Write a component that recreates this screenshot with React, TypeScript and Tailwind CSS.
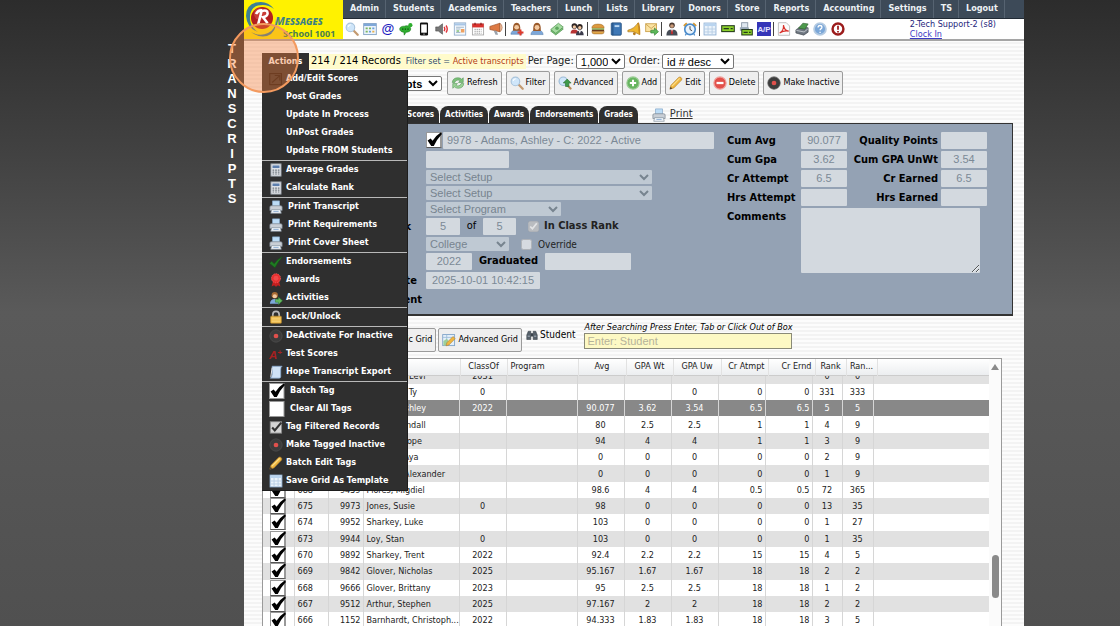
import React from 'react';
import clsx from 'clsx';

// 16x16 drawings used by the toolbar, the menu and the buttons
const icons: Record<string, React.ReactNode> = {
  search: (
    <>
      <path d="M9.5 9.5l5 5" stroke="#c39a70" strokeWidth="2.6" strokeLinecap="round" />
      <circle cx="6.2" cy="6.2" r="4.9" fill="#cfe6fa" stroke="#a9c4dc" strokeWidth="1.3" />
      <path d="M3.6 5.6a3 3 0 0 1 3-2.4" stroke="#fff" strokeWidth="1.2" fill="none" />
    </>
  ),
  searchPlus: (
    <>
      <path d="M10 10l4.4 4.4" stroke="#b98a55" strokeWidth="2.4" strokeLinecap="round" />
      <circle cx="6" cy="6" r="4.8" fill="#cfe6fa" stroke="#9dbbd6" strokeWidth="1.3" />
      <path d="M10.5 3.5l4.5 4.5h-2.6v4H8.6V8H6z" fill="#3f9a4a" stroke="#2b6f35" strokeWidth=".7" />
    </>
  ),
  calendar: (
    <>
      <rect x=".8" y="1.8" width="14.4" height="12.6" fill="#eef5fc" stroke="#7f9fc2" />
      <rect x="1" y="2" width="14" height="2.6" fill="#7fa8d8" />
      <path d="M3 6.4h2.4v2H3zM6.8 6.4h2.4v2H6.8zM3 10h2.4v2H3z" fill="#7bb661" />
      <path d="M10.6 6.4H13v2h-2.4zM6.8 10h2.4v2H6.8z" fill="#6aa0dc" />
      <path d="M10.6 10H13v2h-2.4z" fill="#e8b04c" />
    </>
  ),
  chat: (
    <>
      <path d="M.8 8C.8 5.6 3.600 4.600 6.600 4.800 9 3.600 13.400 4.600 13.400 8c0 2.600-3 3.800-5.400 3.600L6 15l-.4-3.400C3 11.600.8 10.200.8 8z" fill="#2fae2f" stroke="#1c7d1f" strokeWidth=".7" />
      <path d="M3.600 8.200H5M6.600 8.200H8M9.600 8.200H11" stroke="#0b4a0d" strokeWidth="1.500" />
      <circle cx="13" cy="3.600" r="2.400" fill="#2fae2f" />
    </>
  ),
  phone: (
    <>
      <rect x="3.4" y=".6" width="9.2" height="14.8" rx="1.4" fill="#111" />
      <rect x="4.8" y="2.8" width="6.4" height="9.4" fill="#fff" />
      <circle cx="8" cy="13.8" r=".8" fill="#ddd" />
    </>
  ),
  speaker: (
    <>
      <path d="M.8 5.6h3L8.6 2v12L3.8 10.4h-3z" fill="#777" stroke="#444" strokeWidth=".6" />
      <path d="M10.4 5.6q1.6 2.4 0 4.8M12.6 4q2.800 4 0 8" stroke="#e0343a" strokeWidth="1.600" fill="none" />
    </>
  ),
  sheet: (
    <>
      <rect x="1.5" y="1" width="13" height="14" fill="#f4f8fc" stroke="#93aecb" />
      <path d="M2 1.5h12V4H2z" fill="#a8c6e6" />
      <path d="M3.5 6h9M3.5 8h5M3.5 12h5" stroke="#9ab0c5" />
      <path d="M9 8h4v4H9z" fill="#efa160" />
      <path d="M4 9.5h3v1.6H4z" fill="#7dbb6c" />
    </>
  ),
  redCal: (
    <>
      <rect x="1.6" y="2.2" width="12.8" height="12.6" fill="#fff" stroke="#a9a9a9" />
      <rect x="1.4" y="1.8" width="13.2" height="4.4" fill="#d8322e" />
      <path d="M4.6.8v2.6M11.4.8v2.6" stroke="#8d1c1a" strokeWidth="1.4" />
      <path d="M4 8.4h8M4 10.6h8M4 12.8h8" stroke="#888" strokeDasharray="1.4 1" />
    </>
  ),
  megaphone: (
    <>
      <path d="M1 5L12.400 1.400v9.800L1 8.600z" fill="#dd7a45" stroke="#96461d" strokeWidth=".7" />
      <path d="M12.400 1.400v9.800q2.600-1.600 2.600-4.900t-2.600-4.900z" fill="#f3c6a6" stroke="#96461d" strokeWidth=".6" />
      <path d="M5.400 9.600l2 5h3l-1.600-4.400z" fill="#9aa2ab" />
    </>
  ),
  userAdd: (
    <>
      <path d="M1 14q.4-5 6.400-5t6.400 5z" fill="#7da7d9" stroke="#4b77ab" strokeWidth=".6" />
      <path d="M3.400 10Q2.800.8 7.600.8T11.800 10z" fill="#9a5a2b" />
      <circle cx="7.600" cy="6" r="2.700" fill="#f3c9a0" />
      <path d="M12 8.600v6.800M8.600 12h6.800" stroke="#e03a2c" strokeWidth="2.200" />
    </>
  ),
  user: (
    <>
      <path d="M1 14.400q.4-5.400 7-5.400t7 5.400z" fill="#7da7d9" stroke="#4b77ab" strokeWidth=".6" />
      <path d="M3.600 10.400Q3 .8 8 .8t4.400 9.600z" fill="#9a5a2b" />
      <circle cx="8" cy="6.200" r="2.800" fill="#f3c9a0" />
    </>
  ),
  money: (
    <>
      <path d="M.8 10.400L9.600 4l5.600 4L6.600 14.800z" fill="#7fc47c" stroke="#4a8f4b" strokeWidth=".8" />
      <path d="M.8 8.600L9.600 1.400l5.600 4.400L6.600 13z" fill="#a5dba0" stroke="#4a8f4b" strokeWidth=".8" />
      <circle cx="8" cy="7.200" r="2" fill="#5ea75e" />
    </>
  ),
  people: (
    <>
      <circle cx="5" cy="4.600" r="3.200" fill="#2c2422" />
      <circle cx="5" cy="5.600" r="1.900" fill="#f0c6a0" />
      <path d="M.6 13q0-4.400 4.400-4.400T9.400 13z" fill="#b83434" />
      <circle cx="11.200" cy="5.600" r="3.200" fill="#2c2422" />
      <circle cx="11.200" cy="6.600" r="1.900" fill="#f0c6a0" />
      <path d="M6.800 15q0-5 4.400-5t4.400 5z" fill="#3c3c4c" />
      <path d="M10 10.400l1.200 3 1.200-3z" fill="#fff" />
    </>
  ),
  burger: (
    <>
      <path d="M1 7q0-4.600 7-4.600T15 7z" fill="#dd9a3e" stroke="#9a6320" strokeWidth=".6" />
      <path d="M1 7.400h14v1.400H1z" fill="#6fae3c" />
      <path d="M1 8.800h14v2H1z" fill="#6b3a1c" />
      <path d="M1 10.800h14q0 2.800-2.400 2.800H3.400Q1 13.600 1 10.800z" fill="#e2a649" stroke="#9a6320" strokeWidth=".6" />
    </>
  ),
  book: (
    <>
      <rect x="2.600" y="1" width="11.400" height="14" rx="1" fill="#3f78b6" stroke="#234f80" />
      <path d="M4.400 1v14" stroke="#1f4a78" />
      <path d="M6.400 3.600h5.400v2.200H6.400z" fill="#bcd8f2" />
    </>
  ),
  bell: (
    <>
      <path d="M1 9.400Q8.400 7.600 12.600 1l1.800 13.400Q8 9.600 1 11.200z" fill="#efb62f" stroke="#a6741a" strokeWidth=".8" />
      <path d="M12.600 1q1.800 1.400 1.800 13.400" stroke="#c9861a" strokeWidth="1.600" fill="none" />
      <circle cx="8.400" cy="13.400" r="1.600" fill="#b47a1b" />
    </>
  ),
  mail: (
    <>
      <rect x=".8" y="2" width="12.400" height="9" fill="#fbe3a3" stroke="#caa04a" />
      <path d="M1 2.400l6 5 6-5" fill="none" stroke="#caa04a" />
      <path d="M6.600 9.400h4.200V6.800L15.400 11l-4.600 4.200v-2.600H6.600z" fill="#5cb85a" stroke="#2f7d30" strokeWidth=".7" />
    </>
  ),
  man: (
    <>
      <circle cx="8" cy="3.800" r="3.200" fill="#4b3a30" />
      <circle cx="8" cy="4.600" r="2.100" fill="#c99a78" />
      <path d="M1.600 15.400q0-7 6.400-7t6.400 7z" fill="#474d57" />
      <path d="M6.200 8.400L8 12l1.800-3.600z" fill="#fff" />
      <path d="M7.400 9h1.200l.6 4L8 14.400 6.800 13z" fill="#c22a2a" />
    </>
  ),
  clock: (
    <>
      <path d="M1 4.600L4.400 1.400M15 4.600l-3.400-3.200" stroke="#d79a34" strokeWidth="2.200" />
      <circle cx="8" cy="8.400" r="6" fill="#eaf4fd" stroke="#4a8bcb" strokeWidth="1.900" />
      <path d="M8 4.800v3.800l2.400 1.400" stroke="#444" strokeWidth="1.100" fill="none" />
      <path d="M3.800 13.400L2.600 15.200M12.200 13.400l1.200 1.800" stroke="#4a8bcb" strokeWidth="1.400" />
    </>
  ),
  table: (
    <>
      <rect x="1.200" y="1.200" width="13.600" height="13.600" fill="#eaf3fb" stroke="#8fb0d3" />
      <path d="M1.600 1.600h12.800v3H1.600z" fill="#b9d4ef" />
      <path d="M1.200 8h13.600M1.200 11.400h13.600M5.800 4.600v10M10.400 4.600v10" stroke="#b6cde4" />
    </>
  ),
  card: (
    <>
      <rect x=".2" y="3.600" width="15.600" height="8" fill="#23391a" />
      <rect x="1.400" y="4.800" width="13.200" height="5.600" fill="#8bd02c" />
      <path d="M3 7.600h6M11 7.600h2.400" stroke="#23391a" strokeWidth="1.600" />
    </>
  ),
  register: (
    <>
      <rect x="3" y=".8" width="7" height="6" fill="#dfe7ef" stroke="#8795a4" />
      <path d="M1 6h10l1 4H1z" fill="#9aa9b8" />
      <rect x="2.600" y="8" width="13.200" height="7.400" fill="#23391a" />
      <rect x="3.800" y="9.200" width="10.800" height="5" fill="#8bd02c" />
      <path d="M5.200 11.800H10M11.400 11.800h2" stroke="#23391a" strokeWidth="1.400" />
    </>
  ),
  pdf: (
    <>
      <path d="M1.600.8h9l3.800 3.800v10.600H1.600z" fill="#fbfbfb" stroke="#b9b9b9" />
      <path d="M3 12.600c3-1.600 4.600-5.600 4.400-9 .6 4 3 6.600 6 6.800-4-.8-7.400.2-10.400 2.200z" fill="none" stroke="#d8302a" strokeWidth="1.300" />
    </>
  ),
  scanner: (
    <>
      <path d="M1 9l5-3.600 9 1.200v5L10 15 1 12.600z" fill="#6e7680" stroke="#3f454c" strokeWidth=".7" />
      <path d="M4 7l5-5.600 6 .8-3.600 6z" fill="#4d9a4c" stroke="#2c5c2c" strokeWidth=".7" />
      <path d="M1.600 9.600l8.800 1.800L14.600 8" fill="none" stroke="#c8ced4" />
    </>
  ),
  help: (
    <>
      <circle cx="8" cy="8" r="6.800" fill="#7ba7d8" stroke="#b5cbe2" strokeWidth="2" />
      <path d="M5.800 6.200q0-2.200 2.200-2.200t2.200 2q0 1.200-1.200 1.800-.9.500-.9 1.600M8.100 11v1.600" stroke="#fff" strokeWidth="1.500" fill="none" />
    </>
  ),
  alert: (
    <>
      <circle cx="8" cy="8" r="6.200" fill="#fff" stroke="#9c1c1c" strokeWidth="2.800" />
      <path d="M8 4.200v4.600M8 10.200v1.900" stroke="#9c1c1c" strokeWidth="2" />
    </>
  ),
  refresh: (
    <>
      <path d="M1.400 7.400Q2 2 8 2q2.600 0 4.200 1.600L14 2v5.400H8.600l1.800-2Q9.400 4.600 8 4.600 5 4.600 4.400 7.400z" fill="#7cc07a" stroke="#4b8f4d" strokeWidth=".6" />
      <path d="M14.600 8.600Q14 14 8 14q-2.600 0-4.200-1.600L2 14V8.600h5.400l-1.800 2q1 .8 2.400.8 3 0 3.600-2.800z" fill="#9bd298" stroke="#4b8f4d" strokeWidth=".6" />
    </>
  ),
  add: (
    <>
      <circle cx="8" cy="8" r="7" fill="#67b560" stroke="#98cb92" strokeWidth="1.400" />
      <path d="M8 4.400v7.200M4.400 8h7.200" stroke="#fff" strokeWidth="2.200" />
    </>
  ),
  remove: (
    <>
      <circle cx="8" cy="8" r="7" fill="#e2504a" stroke="#f0a19c" strokeWidth="1.400" />
      <path d="M4 8h8" stroke="#fff" strokeWidth="2.600" />
    </>
  ),
  pencil: (
    <>
      <path d="M1 15l1.200-4.400L11 1.600q1.400-1 2.800.2t.6 2.800L5.600 13.600z" fill="#f0b740" stroke="#b3802a" strokeWidth=".7" />
      <path d="M3.400 11.600l8.800-9" stroke="#fbe08d" strokeWidth="1.300" />
      <path d="M1 15l.8-2.800 2 2z" fill="#4a3a2a" />
    </>
  ),
  record: (
    <>
      <circle cx="8" cy="8" r="7" fill="#3c3c3c" stroke="#4c4c4c" />
      <circle cx="8" cy="8" r="2.700" fill="#e0504c" />
    </>
  ),
  printer: (
    <>
      <path d="M4 7V1h8v6z" fill="#bcdcf6" stroke="#86a8c9" strokeWidth=".8" />
      <path d="M1 12V8q0-1.400 1.600-1.400h10.800Q15 6.600 15 8v4z" fill="#c9cfd6" stroke="#7d8791" strokeWidth=".8" />
      <path d="M3 11h10l1 4.200H2z" fill="#eef3f8" stroke="#8794a1" strokeWidth=".8" />
      <path d="M5 13h6" stroke="#7fa3cd" />
    </>
  ),
  calc: (
    <>
      <rect x="2.200" y="1" width="11.600" height="14" fill="#e6e9ed" stroke="#9097a0" />
      <rect x="4" y="2.800" width="8" height="3" fill="#5d7fae" />
      <path d="M4 8.200h8M4 10.400h8M4 12.600h8" stroke="#6d747c" strokeWidth="1.300" strokeDasharray="2 1" />
    </>
  ),
  check: <path d="M.6 9.600l2.400-2.400 3 2.800Q9.600 4.600 15.400 1.600q-5 6-8.600 13z" fill="#1f7a22" stroke="#135516" strokeWidth=".6" />,
  ribbon: (
    <>
      <path d="M4.600 9L3 15.400l2.800-1.400L8 15.600l2.200-1.600 2.800 1.400L11.400 9z" fill="#c41f1f" />
      <circle cx="8" cy="6" r="5.200" fill="#e83030" stroke="#ee5c5c" strokeDasharray="1.600 1" />
      <circle cx="8" cy="6" r="2.800" fill="#f04a4a" />
    </>
  ),
  userArrow: (
    <>
      <path d="M1 14.600q.4-5.600 5.600-5.600t5.600 5.600z" fill="#7da7d9" />
      <circle cx="6.600" cy="4.800" r="3.600" fill="#a86a33" />
      <circle cx="6.600" cy="6" r="2.400" fill="#f3c9a0" />
      <path d="M7.400 9.400h3.400V7l4.600 4.200-4.600 4.200v-2.600H7.400z" fill="#63b85f" stroke="#2f7d30" strokeWidth=".6" />
    </>
  ),
  lock: (
    <>
      <path d="M4.400 8V5q0-3.400 3.600-3.400T11.600 5v3" fill="none" stroke="#b9b9b9" strokeWidth="1.900" />
      <rect x="1.800" y="7" width="12.400" height="8.200" rx="1" fill="#efb947" stroke="#b3832a" strokeWidth=".7" />
      <path d="M3 9.400h10M3 11.400h10M3 13.400h10" stroke="#f8dc8e" strokeWidth=".8" />
    </>
  ),
  aPlus: (
    <text x="0" y="14" fontSize="13" fontWeight="bold" fontStyle="italic" fontFamily="Liberation Sans, sans-serif" fill="#a82020">
      A<tspan dy="-5" fontSize="9">+</tspan>
    </text>
  ),
  at: (
    <text x="8" y="12.500" textAnchor="middle" fontSize="15" fontWeight="bold" fontFamily="Liberation Sans, sans-serif" fill="#1a1ac0">
      @
    </text>
  ),
  ap: (
    <>
      <rect width="16" height="16" fill="#3535b8" />
      <text x="8" y="11.500" textAnchor="middle" fontSize="9" fontWeight="bold" fontFamily="Liberation Sans, sans-serif" fill="#e4e4ff">
        A/P
      </text>
    </>
  ),
  scroll: (
    <>
      <path d="M3.600 1.400H15q-1.800 1-1.600 4v8q0 1.600-1.600 1.600H1.400q1.800-1 2.200-4z" fill="#cfe2f6" stroke="#7fa3cd" strokeWidth=".8" />
      <path d="M3.600 3L2 13.600" stroke="#fff" />
    </>
  ),
  tagCheck: (
    <>
      <rect x="1.400" y="2" width="13" height="13" fill="#d5d5d5" stroke="#888" />
      <path d="M3.600 8.600l3 3.200L14 3" stroke="#333" strokeWidth="2.400" fill="none" />
    </>
  ),
  gridEdit: (
    <>
      <rect x=".8" y="1.800" width="13.600" height="12.600" fill="#e4f0fa" stroke="#7fa3c8" />
      <path d="M.8 5h13.600M5.400 2v12" stroke="#9dbbd8" />
      <path d="M1.600 9l4-2.400 3 4-4.400 3.600H1.600z" fill="#9ccf9a" />
      <path d="M4.600 14.600l.9-3.400 7-7.200 2.600 2.400-7.200 7.400z" fill="#efb740" stroke="#a8772a" strokeWidth=".6" />
    </>
  ),
  binoculars: (
    <>
      <path d="M1 14V8l2-5h3.400v11zM15 14V8l-2-5H9.600v11z" fill="#56606a" stroke="#333b43" strokeWidth=".7" />
      <path d="M6.400 5.600h3.200V10H6.400z" fill="#39424b" />
      <path d="M2.200 9.600h3M10.800 9.600h3" stroke="#a9b4bf" strokeWidth="1.300" />
    </>
  ),
  external: (
    <g stroke="#15110f" strokeWidth="1.300" fill="none">
      <rect x=".8" y="1.800" width="13.400" height="12.600" />
      <path d="M3.600 12L12 4.400M6.600 4h5.800v5.600" />
    </g>
  ),
};

const tick = 'M1.600 8.400l3-2 2 2.400Q9.600 3.600 15 .2l.9 1.800Q10.600 7.600 7.800 14H5.200z';

function Icon({ name, className = 'size-[14px]' }: { name: string; className?: string }) {
  return (
    <svg viewBox="0 0 16 16" aria-hidden="true" className={clsx('shrink-0', className)}>
      {icons[name]}
    </svg>
  );
}

function TagBox({ label, checked = true }: { label: string; checked?: boolean }) {
  return (
    <span className="relative block size-[16px] shrink-0">
      <input
        type="checkbox"
        aria-label={label}
        defaultChecked={checked}
        className="peer block size-[16px] appearance-none border border-[#999] border-r-2 border-r-[#999] border-b-[#555] bg-white"
      />
      <svg viewBox="0 0 16 16" aria-hidden="true" className="pointer-events-none absolute inset-0 hidden size-[16px] peer-checked:block">
        <path d={tick} fill="#000" />
      </svg>
    </span>
  );
}

const navItems = ['Admin', 'Students', 'Academics', 'Teachers', 'Lunch', 'Lists', 'Library', 'Donors', 'Store', 'Reports', 'Accounting', 'Settings', 'TS', 'Logout'];

const toolGroups = [
  ['search', 'calendar', 'at', 'chat', 'phone', 'speaker', 'sheet', 'redCal', 'megaphone'],
  ['userAdd', 'user', 'money', 'people'],
  ['burger', 'book', 'bell', 'mail'],
  ['man', 'clock'],
  ['table', 'card', 'register', 'ap'],
  ['pdf', 'scanner', 'help', 'alert'],
];

type MenuItem = { text: string; icon?: string; wide?: boolean; box?: boolean };

const menuGroups: MenuItem[][] = [
  [
    { text: 'Add/Edit Scores', icon: 'external' },
    { text: 'Post Grades' },
    { text: 'Update In Process' },
    { text: 'UnPost Grades' },
    { text: 'Update FROM Students' },
  ],
  [
    { text: 'Average Grades', icon: 'calc' },
    { text: 'Calculate Rank', icon: 'calc' },
  ],
  [
    { text: 'Print Transcript', icon: 'printer', wide: true },
    { text: 'Print Requirements', icon: 'printer', wide: true },
    { text: 'Print Cover Sheet', icon: 'printer', wide: true },
  ],
  [
    { text: 'Endorsements', icon: 'check' },
    { text: 'Awards', icon: 'ribbon' },
    { text: 'Activities', icon: 'userArrow' },
  ],
  [{ text: 'Lock/Unlock', icon: 'lock' }],
  [
    { text: 'DeActivate For Inactive', icon: 'record' },
    { text: 'Test Scores', icon: 'aPlus' },
    { text: 'Hope Transcript Export', icon: 'scroll' },
  ],
  [
    { text: 'Batch Tag', box: true },
    { text: 'Clear All Tags', box: false },
    { text: 'Tag Filtered Records', icon: 'tagCheck' },
    { text: 'Make Tagged Inactive', icon: 'record' },
    { text: 'Batch Edit Tags', icon: 'pencil' },
    { text: 'Save Grid As Template', icon: 'table' },
  ],
];

const buttons = [
  ['refresh', 'Refresh'],
  ['search', 'Filter'],
  ['searchPlus', 'Advanced'],
  ['add', 'Add'],
  ['pencil', 'Edit'],
  ['remove', 'Delete'],
  ['record', 'Make Inactive'],
];

const tabs = ['Test Scores', 'Activities', 'Awards', 'Endorsements', 'Grades'];

const headers = ['', '', '', '', 'ClassOf', 'Program', 'Avg', 'GPA Wt', 'GPA Uw', 'Cr Atmpt', 'Cr Ernd', 'Rank', 'Ran...', ''];

// tag id, student id, name, class, program, avg, wt, uw, attempted, earned, rank, of
const rows = [
  ['698', '9984', 'Simmons, Levi', '2031', '', '', '', '', '', '', '0', '0'],
  ['697', '9981', 'Robinson, Ty', '0', '', '', '', '0', '0', '0', '331', '333'],
  ['696', '9978', 'Adams, Ashley', '2022', '', '90.077', '3.62', '3.54', '6.5', '6.5', '5', '5'],
  ['694', '9977', 'James, Kendall', '', '', '80', '2.5', '2.5', '1', '1', '4', '9'],
  ['693', '9976', 'Moore, Shope', '', '', '94', '4', '4', '1', '1', '3', '9'],
  ['692', '9975', 'Thomas, Aya', '', '', '0', '0', '0', '0', '0', '2', '9'],
  ['691', '9974', 'Hopkins, Alexander', '', '', '0', '0', '0', '0', '0', '1', '9'],
  ['688', '9459', 'Flores, Migdiel', '', '', '98.6', '4', '4', '0.5', '0.5', '72', '365'],
  ['675', '9973', 'Jones, Susie', '0', '', '98', '0', '0', '0', '0', '13', '35'],
  ['674', '9952', 'Sharkey, Luke', '', '', '103', '0', '0', '0', '0', '1', '27'],
  ['673', '9944', 'Loy, Stan', '0', '', '103', '0', '0', '0', '0', '1', '35'],
  ['670', '9892', 'Sharkey, Trent', '2022', '', '92.4', '2.2', '2.2', '15', '15', '4', '5'],
  ['669', '9842', 'Glover, Nicholas', '2025', '', '95.167', '1.67', '1.67', '18', '18', '2', '2'],
  ['668', '9666', 'Glover, Brittany', '2023', '', '95', '2.5', '2.5', '18', '18', '1', '2'],
  ['667', '9512', 'Arthur, Stephen', '2025', '', '97.167', '2', '2', '18', '18', '2', '2'],
  ['666', '1152', 'Barnhardt, Christoph...', '2022', '', '94.333', '1.83', '1.83', '18', '18', '3', '5'],
];

const cellAlign = ['text-left pl-[3px]', 'text-right pr-[2px]', 'text-left pl-[3px]', 'text-center', 'text-left', 'text-center', 'text-center', 'text-center', 'text-right pr-[2px]', 'text-right pr-[2px]', 'text-center', 'text-center'];
const headAlign = ['', '', '', '', 'text-center', 'text-left pl-[3px]', 'text-center', 'text-center', 'text-center', 'text-right pr-[3px]', 'text-right pr-[3px]', 'text-center', 'text-center', ''];
const headCols = ['w-[31px]', 'w-[35px]', 'w-[35px]', 'w-[96px]', 'w-[47px]', 'w-[71px]', 'w-[48px]', 'w-[47px]', 'w-[48px]', 'w-[47px]', 'w-[47px]', 'w-[31px]', 'w-[31px]', ''];
const bodyCols = ['w-[31px]', 'w-[34px]', 'w-[35px]', 'w-[96px]', 'w-[47px]', 'w-[71px]', 'w-[47px]', 'w-[47px]', 'w-[47px]', 'w-[47px]', 'w-[47px]', 'w-[30px]', 'w-[31px]', ''];

const arial = "font-['Liberation_Sans',Arial,sans-serif]";
const field = "block h-[17px] rounded-[1px] bg-[#d3d9df] px-[4px] font-['Liberation_Sans',Arial,sans-serif] text-[11px] leading-[17px] font-normal text-[#7b8996] disabled:opacity-100";
const drop = "block h-[14px] rounded-[1px] bg-[#bfc9d3] font-['Liberation_Sans',Arial,sans-serif] text-[11px] leading-[14px] font-normal text-[#77848f] disabled:opacity-100";
const btn = 'flex h-[24px] shrink-0 items-center gap-[2px] rounded-[2px] border border-[#9b9b9b] bg-[#efefef] px-[3px] whitespace-nowrap text-black';

function Header() {
  return (
    <header className="flex border-b-2 border-[#a5a5a5] bg-white">
      <div className="flex h-[39px] w-[99px] shrink-0 bg-[#fff200]">
        <svg viewBox="0 0 34 38" aria-hidden="true" className="h-[38px] w-[34px] shrink-0">
          <circle cx="18" cy="18" r="11" fill="#b3201f" />
          <circle cx="16" cy="14" r="6" fill="#d9534a" opacity=".6" />
          <path d="M14 25l3.600-14q6-1.600 6 2.200 0 3-4.600 4l4.600 6M12 14q2-4 6-3.600" fill="none" stroke="#fff" strokeWidth="2.600" />
          <path d="M2 16Q2 5 12 2.600 23 0 30 9 23 3.600 14 5.600 5.400 8 6 19q.4 8 8 13Q3 28 2 16z" fill="#3c7f95" />
          <path d="M7 32q9 5 17 1 8-4 8-14 .8 10-5 15-9 6-20-2z" fill="#3c7f95" />
        </svg>
        <div className="flex flex-col pt-[14px] font-['Noto_Sans',sans-serif] font-bold text-[#4a7d50]">
          <span className="-ml-[3px] text-[11px] leading-[13px] text-[#3d7f86] italic [font-variant:small-caps]">Messages</span>
          <span className="ml-[5px] text-[9px] leading-[13px] whitespace-nowrap">School 1001</span>
        </div>
      </div>
      <div className="min-w-0 flex-1">
        <nav className="flex h-[19px] border-b border-[#222b35] bg-[#3d4a58]">
          {navItems.map((item) => (
            <a key={item} href="#" className="flex items-center border-r border-[#566371] pr-[6px] pl-[7px] font-bold text-[#eef2f5]">
              {item}
            </a>
          ))}
        </nav>
        <div className="flex h-[20px] items-center">
          {toolGroups.map((group, g) => (
            <div key={g} className="flex items-center">
              {g > 0 && <span className="mr-px h-[14px] w-px bg-[#444]" />}
              {group.map((name) => (
                <button key={name} type="button" aria-label={name} className={clsx('flex justify-center', g === 1 ? 'w-[20px]' : 'w-[18px]')}>
                  <Icon name={name} />
                </button>
              ))}
            </div>
          ))}
          <div className="mr-[28px] ml-auto flex flex-col leading-[10px] text-[#26267c]">
            <span>2-Tech Support-2 (s8)</span>
            <a href="#" className="text-[#3a3ac4] underline">Clock In</a>
          </div>
        </div>
      </div>
    </header>
  );
}

function ActionsMenu() {
  return (
    <div className="relative z-20">
      <button type="button" className="block h-[17px] w-[47px] bg-[#2f2f2f] font-bold text-white">Actions</button>
      <ul className="absolute top-[17px] left-0 w-[146px] border-r border-b border-[#1d1d1d] bg-[#2f2f2f] font-bold text-white">
        {menuGroups.map((group, g) => (
          <li key={g} className={clsx(g > 0 && 'border-t border-[#b9b9b9]')}>
            {group.map((item) => (
              <button
                key={item.text}
                type="button"
                className={clsx('flex h-[18px] w-full items-center pl-[7px] whitespace-nowrap', item.wide || item.box !== undefined ? 'gap-[5px]' : 'gap-[3px]')}
              >
                {item.box !== undefined ? (
                  <svg viewBox="0 0 16 16" aria-hidden="true" className="size-[16px] shrink-0">
                    <rect x=".5" y=".5" width="14.500" height="15" fill="#fff" stroke="#999" />
                    {item.box && <path d={tick} fill="#000" />}
                  </svg>
                ) : item.icon ? (
                  <Icon name={item.icon} />
                ) : (
                  <span className="w-[14px]" />
                )}
                {item.text}
              </button>
            ))}
          </li>
        ))}
      </ul>
      {/* click highlight */}
      <span className="pointer-events-none absolute -top-[30px] -left-[33px] size-[70px] rounded-full border-2 border-[#f39a5f] bg-[#f5803c]/40" />
    </div>
  );
}

function RecordPanel() {
  return (
    <section className="flex border border-b-2 border-[#333] bg-[#94a2b4] pt-[8px] pb-[6px] text-[11px] font-bold text-black">
      <div className="flex w-[163px] shrink-0 flex-col items-end gap-[2px] leading-[17px]">
        <span className="h-[84px]" />
        <span className="pr-[15px]">Class Rank</span>
        <span className="h-[14px]" />
        <span className="h-[17px]" />
        <span className="pr-[9px]">Last Update</span>
        <span className="pr-[4px]">Department</span>
      </div>
      <div className="flex min-w-0 flex-1 flex-col gap-[2px]">
        <div className="flex gap-px">
          <TagBox label="Tagged" />
          <input aria-label="Student record" disabled value="9978 - Adams, Ashley - C: 2022 - Active" className={clsx(field, 'w-[271px]')} />
        </div>
        <input aria-label="Record code" disabled className={clsx(field, 'w-[83px]')} />
        <select aria-label="Primary setup" disabled className={clsx(drop, 'w-[226px]')}><option>Select Setup</option></select>
        <select aria-label="Secondary setup" disabled className={clsx(drop, 'w-[226px]')}><option>Select Setup</option></select>
        <select aria-label="Program" disabled className={clsx(drop, 'w-[135px]')}><option>Select Program</option></select>
        <div className="flex items-center">
          <input aria-label="Rank" disabled value="5" className={clsx(field, 'w-[34px] text-center')} />
          <span className="w-[23px] text-center font-normal">of</span>
          <input aria-label="Rank total" disabled value="5" className={clsx(field, 'w-[33px] text-center')} />
          <label className="ml-[12px] flex items-center gap-[5px] text-[#222]">
            <input type="checkbox" disabled defaultChecked className="size-[11px]" />
            In Class Rank
          </label>
        </div>
        <div className="flex h-[14px] items-center">
          <select aria-label="Level" disabled className={clsx(drop, 'w-[83px]')}><option>College</option></select>
          <label className="ml-[12px] flex items-center gap-[6px] text-[10px] font-normal text-[#222]">
            <input type="checkbox" disabled className="size-[11px]" />
            Override
          </label>
        </div>
        <div className="flex items-center">
          <input aria-label="Class of" disabled value="2022" className={clsx(field, 'w-[46px] text-center')} />
          <label htmlFor="graduated" className="w-[73px] text-center">Graduated</label>
          <input id="graduated" disabled className={clsx(field, 'w-[86px]')} />
        </div>
        <input aria-label="Updated" disabled value="2025-10-01 10:42:15" className={clsx(field, 'w-[114px] text-center')} />
      </div>
      <div className="mr-[25px] grid shrink-0 auto-rows-min grid-cols-[74px_46px_94px_46px] gap-y-[2px] leading-[17px]">
        <label htmlFor="avg">Cum Avg</label>
        <input id="avg" disabled value="90.077" className={clsx(field, 'text-center')} />
        <label htmlFor="quality" className="pr-[3px] text-right">Quality Points</label>
        <input id="quality" disabled className={field} />
        <label htmlFor="gpa">Cum Gpa</label>
        <input id="gpa" disabled value="3.62" className={clsx(field, 'text-center')} />
        <label htmlFor="unwt" className="pr-[3px] text-right whitespace-nowrap">Cum GPA UnWt</label>
        <input id="unwt" disabled value="3.54" className={clsx(field, 'text-center')} />
        <label htmlFor="attempt">Cr Attempt</label>
        <input id="attempt" disabled value="6.5" className={clsx(field, 'text-center')} />
        <label htmlFor="earned" className="pr-[3px] text-right">Cr Earned</label>
        <input id="earned" disabled value="6.5" className={clsx(field, 'text-center')} />
        <label htmlFor="hrs">Hrs Attempt</label>
        <input id="hrs" disabled className={field} />
        <label htmlFor="hrsEarned" className="pr-[3px] text-right">Hrs Earned</label>
        <input id="hrsEarned" disabled className={field} />
        <label htmlFor="comments">Comments</label>
        <textarea id="comments" disabled className="col-span-3 block h-[65px] w-[179px] resize rounded-[1px] bg-[#d3d9df]" />
      </div>
    </section>
  );
}

function Grid() {
  return (
    <section className="mt-[6px] mr-[11px] flex min-h-0 flex-1 border border-b-0 border-[#9a9a9a] bg-white">
      <div className="flex min-w-0 flex-1 flex-col">
        <table className="relative z-10 w-full table-fixed border-collapse bg-linear-to-b from-white to-[#eceef0]">
          <colgroup>{headCols.map((w, i) => <col key={i} className={w} />)}</colgroup>
          <thead>
            <tr className="h-[16px] border-b border-[#ccc]">
              {headers.map((h, i) => (
                <th key={i} className={clsx('border-r border-[#e2e2e2] p-0 font-normal whitespace-nowrap', headAlign[i], i === 13 && 'border-r-0')}>{h}</th>
              ))}
            </tr>
          </thead>
        </table>
        <div className="min-h-0 flex-1 overflow-hidden">
          <table className="-mt-[8px] h-[261px] w-full table-fixed border-collapse">
            <colgroup>{bodyCols.map((w, i) => <col key={i} className={w} />)}</colgroup>
            <tbody>
              {rows.map((row, r) => (
                <tr key={row[0]} className={clsx(r === 2 ? 'bg-[#888] text-white' : r % 2 === 0 ? 'bg-[#e1e1e1]' : 'bg-white')}>
                  <td className="border-r border-[#d6d6d6] p-0">
                    <div className="flex h-[16px] justify-center"><TagBox label={'Tag ' + row[2]} /></div>
                  </td>
                  {row.map((cell, c) => (
                    <td key={c} className={clsx('overflow-hidden border-r border-[#d6d6d6] p-0 leading-[16px] whitespace-nowrap', cellAlign[c])}>{cell}</td>
                  ))}
                  <td className="p-0" />
                </tr>
              ))}
            </tbody>
          </table>
        </div>
      </div>
      <div className="flex w-[12px] shrink-0 flex-col items-center bg-[#fbfbfb] pt-[5px]">
        <svg viewBox="0 0 8 6" aria-hidden="true" className="h-[6px] w-[8px]"><path d="M0 6L4 0l4 6z" fill="#8a8a8a" /></svg>
        <span className="mt-[185px] h-[43px] w-[7px] rounded-full bg-[#8a8a8a]" />
      </div>
    </section>
  );
}

export default function App() {
  return (
    <div className="flex h-screen overflow-hidden bg-linear-to-b from-[#2c2c2c] via-[#5a5a5a] to-[#505050] font-['DejaVu_Sans_Condensed','Noto_Sans',sans-serif] text-[9px] text-[#222]">
      <aside className={clsx('flex w-[244px] shrink-0 flex-col items-end pt-[41px] pr-[6px] text-[13px] leading-[15px] font-bold text-white', arial)}>
        {'TRANSCRIPTS'.split('').map((c, i) => <span key={i} className="w-[12px] text-center">{c}</span>)}
      </aside>
      <main className="flex min-w-0 flex-1 flex-col bg-[repeating-linear-gradient(to_bottom,#fcfcfc_0px,#fcfcfc_2px,#f3f3f3_2px,#f3f3f3_4px)]">
        <Header />
        <div className="flex min-h-0 flex-1 flex-col pt-[12px] pr-[11px] pl-[18px]">
          <div className="flex h-[17px] items-center">
            <ActionsMenu />
            <p className="flex h-[15px] items-center gap-[5px] bg-[#fffbcc] px-[2px] whitespace-nowrap">
              <span className="text-[11px] text-black">214 / 214 Records</span>
              <span className="text-[#2c4a6c]">Filter set = <span className="text-[#b23a14]">Active transcripts</span></span>
            </p>
            <label htmlFor="perPage" className="ml-[2px] text-[11px] whitespace-nowrap">Per Page:</label>
            <select id="perPage" className={clsx('ml-[2px] h-[15px] w-[49px] rounded-[2px] border border-[#777] bg-white text-[11px] leading-[13px] text-black', arial)}><option>1,000</option></select>
            <label htmlFor="order" className="ml-[4px] text-[11px] whitespace-nowrap">Order:</label>
            <select id="order" className={clsx('ml-[2px] h-[15px] w-[72px] rounded-[2px] border border-[#777] bg-white text-[11px] leading-[13px] text-black', arial)}><option>id # desc</option></select>
          </div>
          <div className="mt-px flex items-center gap-[4px]">
            <div className="flex w-[181px] shrink-0 justify-end pr-px">
              <select aria-label="Section" className={clsx('h-[15px] w-[84px] rounded-[2px] border border-[#777] bg-white text-[11px] leading-[13px] font-bold text-black', arial)}><option>Transcripts</option></select>
            </div>
            {buttons.map(([icon, text]) => (
              <button key={text} type="button" className={btn}><Icon name={icon} />{text}</button>
            ))}
          </div>
          <div className="mt-[11px] flex h-[17px] items-end">
            <div className="flex h-full gap-px pl-[121px]">
              {tabs.map((t) => (
                <button key={t} type="button" className="rounded-t-[8px] bg-[#2f2f2f] px-[5px] text-[8px] font-bold whitespace-nowrap text-white">{t}</button>
              ))}
            </div>
            <a href="#" className="ml-[14px] flex h-full items-center gap-[4px] text-[11px] text-[#333] underline"><Icon name="printer" />Print</a>
          </div>
          <RecordPanel />
          <div className="mt-[11px] flex items-center">
            <div className="flex w-[260px] shrink-0 justify-end gap-[2px]">
              <button type="button" className={btn}><Icon name="table" />Basic Grid</button>
              <button type="button" className={btn}><Icon name="gridEdit" />Advanced Grid</button>
            </div>
            <label htmlFor="student" className="ml-[4px] flex items-center gap-[2px] pb-[10px] text-[10px] text-black"><Icon name="binoculars" className="size-[12px]" />Student</label>
            <div className="-mt-[8px] ml-[9px] flex flex-col">
              <em className="leading-[11px] text-black">After Searching Press Enter, Tab or Click Out of Box</em>
              <input id="student" placeholder="Enter: Student" className={clsx('h-[16px] w-[208px] border border-[#8a8a78] bg-[#fdf9c4] px-[2px] text-[11px] leading-[14px] placeholder:text-[#b5b39a]', arial)} />
            </div>
          </div>
          <Grid />
        </div>
      </main>
      <div className="w-[96px] shrink-0" />
    </div>
  );
}
